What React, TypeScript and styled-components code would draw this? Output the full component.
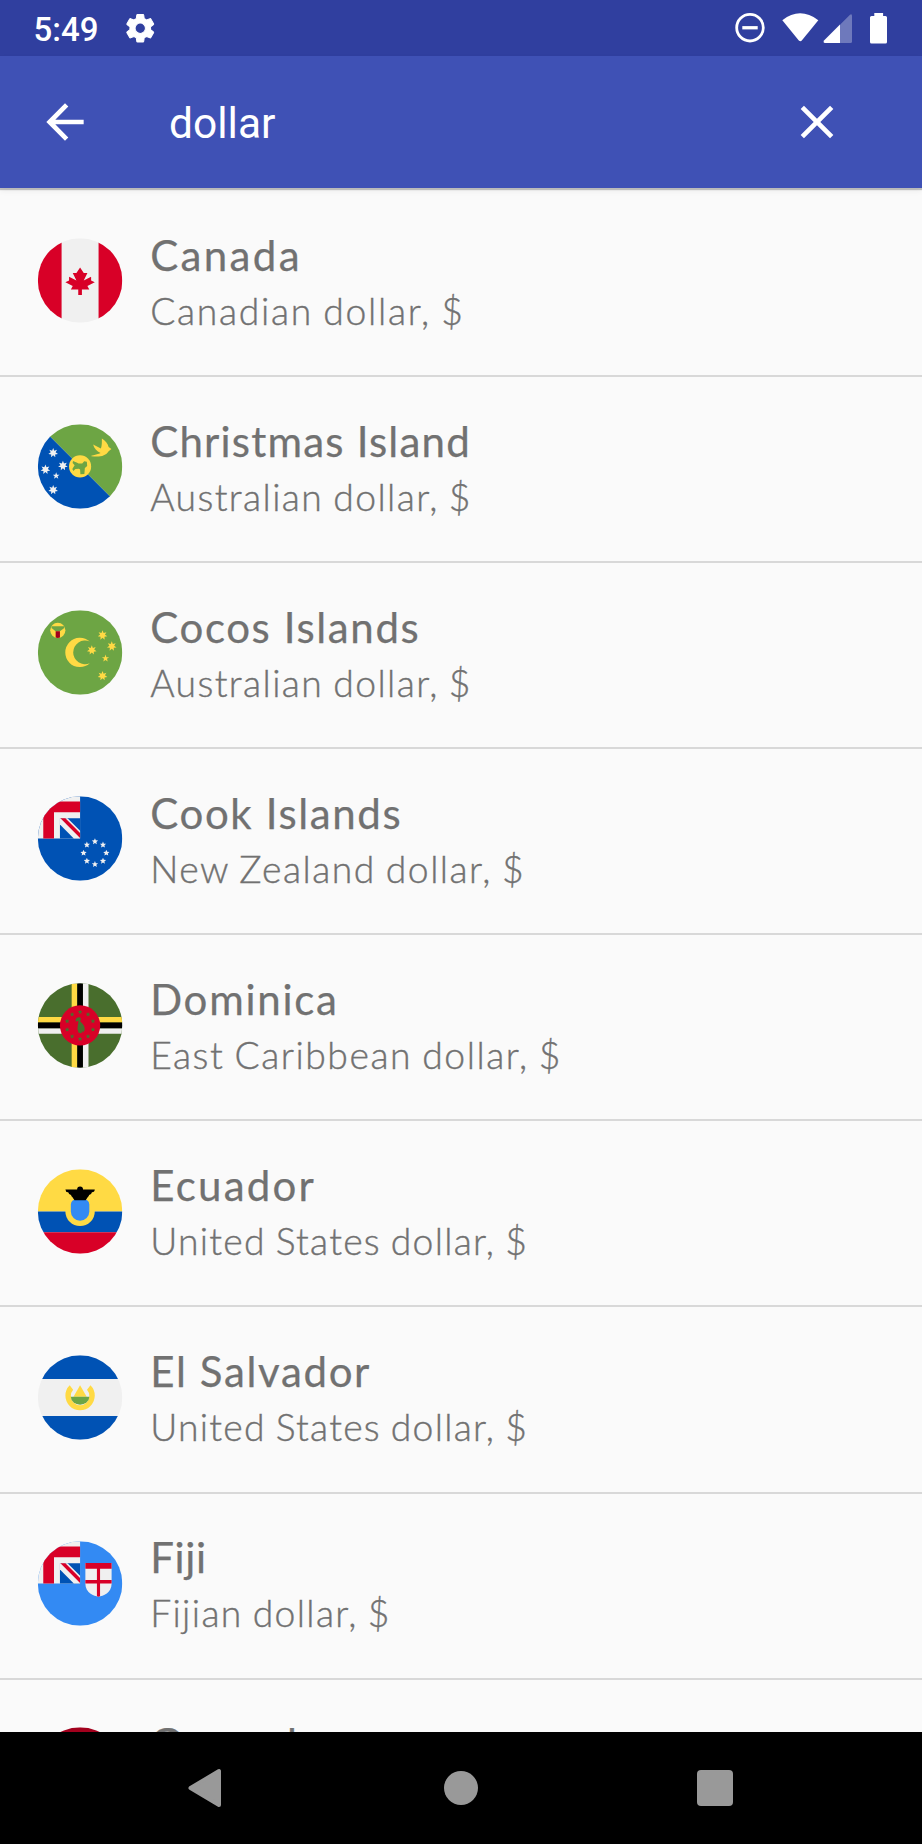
import React from 'react';
import styled, { createGlobalStyle } from 'styled-components';
import { MdArrowBack, MdClose, MdSettings } from 'react-icons/md';

const GlobalStyle = createGlobalStyle`
  * { box-sizing: border-box; }
  html, body { margin: 0; padding: 0; overflow: hidden; background: #fafafa; }
`;

const Screen = styled.div`
  width: 922px;
  height: 1844px;
  display: flex;
  flex-direction: column;
  overflow: hidden;
  background: #fafafa;
  font-family: Lato, 'Liberation Sans', sans-serif;
`;

const StatusBar = styled.header`
  flex: none;
  height: 56px;
  padding: 0 34px 0 33.5px;
  display: flex;
  align-items: center;
  background: #303f9f;
  color: #fff;
  svg { display: block; }
`;

const Clock = styled.span`
  width: 89.5px;
  font: 500 33px/56px Roboto, sans-serif;
  padding-top: 3px;
`;

const Gear = styled(MdSettings)`
  path[fill='none'] { stroke: none; }
`;

const StatusIcons = styled.div`
  margin-left: auto;
  display: flex;
  height: 56px;
`;

const AppBar = styled.div`
  flex: none;
  position: relative;
  z-index: 1;
  height: 132px;
  padding: 0 77px 0 37px;
  display: flex;
  align-items: center;
  background: #3f51b5;
  color: #fff;
  box-shadow: 0 2px 1px rgba(0, 0, 0, 0.22), 0 3px 6px rgba(0, 0, 0, 0.06);
`;

const Query = styled.span`
  flex: 1;
  margin-left: 76px;
  padding-top: 4px;
  font: 400 42.5px/56px Roboto, sans-serif;
`;

const IconButton = styled.button`
  width: 56px;
  height: 56px;
  padding: 0;
  border: 0;
  background: none;
  color: inherit;
  svg { display: block; }
`;

const List = styled.ul`
  flex: 1;
  min-height: 0;
  margin: 0;
  padding: 2.9px 0 0;
  list-style: none;
  overflow: hidden;
`;

const Row = styled.li`
  height: 186.1px;
  padding: 47.3px 37px 0;
  display: flex;
  gap: 27.2px;
  border-bottom: 2px solid #d8d8d8;
`;

const FlagSvg = styled.svg`
  flex: none;
  width: 86px;
  height: 86px;
  display: block;
`;

const Labels = styled.div`
  color: #717171;
  white-space: nowrap;
`;

const Country = styled.div<{ $track: number }>`
  margin-top: -11.7px;
  font-size: 42px;
  line-height: 56px;
  font-weight: 400;
  -webkit-text-stroke: 0.25px #717171;
  letter-spacing: ${(p) => p.$track}px;
`;

const Currency = styled.div<{ $track: number }>`
  font-size: 37.3px;
  line-height: 56px;
  font-weight: 300;
  -webkit-text-stroke: 0.4px #717171;
  word-spacing: -1.5px;
  letter-spacing: ${(p) => p.$track}px;
`;

const NavBar = styled.nav`
  flex: none;
  height: 112.5px;
  padding: 0 187px;
  display: flex;
  justify-content: space-between;
  align-items: center;
  background: #000;
`;

function Star({ x, y, r, n = 7, inner = 0.5, fill }: { x: number; y: number; r: number; n?: number; inner?: number; fill: string }) {
  const points = Array.from({ length: n * 2 }, (_, i) => {
    const a = (Math.PI * i) / n - Math.PI / 2;
    const d = i % 2 ? r * inner : r;
    return `${(x + d * Math.cos(a)).toFixed(1)},${(y + d * Math.sin(a)).toFixed(1)}`;
  }).join(' ');
  return <polygon points={points} fill={fill} />;
}

function UnionJack({ field }: { field: string }) {
  return (
    <>
      <path d="M0 0H256V256H0z" fill="#f0f0f0" />
      <path d="M33 256V33H256V98H98V256z" fill="#d80027" />
      <path d="M134 256V134H256V256z" fill={field} />
      <path d="M134 134H180L256 210V256H218L134 172z" fill="#f0f0f0" />
      <path d="M137 134H167L256 223V253z" fill="#d80027" />
    </>
  );
}

const Y = '#ffda44';
const W = '#f0f0f0';
const G = '#6da544';
const B = '#0052b4';
const R = '#d80027';

const flags: Record<string, React.ReactNode> = {
  ca: (
    <>
      <path d="M0 0H512V512H0z" fill={W} />
      <path d="M0 0H144V512H0zM368 0H512V512H368z" fill={R} />
      <path d="M300.522 289.391L345.043 267.13l-22.26-11.13v-22.261L278.26 256l22.262-44.522H278.26L256 178.087l-22.26 33.391h-22.262L233.74 256l-44.522-22.261V256l-22.26 11.13 44.52 22.261-11.13 22.261h44.522v33.391h22.26v-33.391h44.522z" fill={R} />
    </>
  ),
  cx: (
    <>
      <path d="M0 0H512V512z" fill={G} />
      <path d="M0 0V512H512z" fill={B} />
      <circle cx="256" cy="256" r="67" fill={Y} />
      <path d="M213 223l22 9 12 6h22l12-14 16 3 2 27-14 12-3 36-24 2-2-30-8-4-20 2-13 11-6-12 14-22-12-14z" fill={G} />
      <path d="M324 191C352 184 368 180 380 174 357 164 341 147 335 123L382 147C389 130 388 108 388 87 409 98 424 119 429 138L446 151 429 164C411 194 373 201 324 194z" fill={Y} />
      <Star x={93} y={174} r={30} fill={W} />
      <Star x={46} y={275} r={30} fill={W} />
      <Star x={152} y={252} r={30} fill={W} />
      <Star x={111} y={313} r={22} n={5} inner={0.4} fill={W} />
      <Star x={93} y={398} r={30} fill={W} />
    </>
  ),
  cc: (
    <>
      <path d="M0 0H512V512H0z" fill={G} />
      <circle cx="121" cy="122" r="46" fill={Y} />
      <path d="M83 97H160V108L134 128H108L83 108z" fill={G} />
      <path d="M108 128H134V166Q121 171 108 166z" fill="#a2001d" />
      <path d="M315 190A89 89 0 1 0 315 322A72 72 0 1 1 315 190z" fill={Y} />
      <Star x={327} y={242} r={30} fill={Y} />
      <Star x={392} y={152} r={30} fill={Y} />
      <Star x={448} y={219} r={30} fill={Y} />
      <Star x={410} y={292} r={23} n={5} inner={0.4} fill={Y} />
      <Star x={392} y={398} r={30} fill={Y} />
    </>
  ),
  ck: (
    <>
      <path d="M0 0H512V512H0z" fill={B} />
      <UnionJack field={B} />
      {Array.from({ length: 8 }, (_, i) => (
        <Star key={i} x={346 + 69 * Math.cos((i * Math.PI) / 4)} y={344 + 69 * Math.sin((i * Math.PI) / 4)} r={20} n={5} inner={0.45} fill={W} />
      ))}
    </>
  ),
  dm: (
    <>
      <path d="M0 0H512V512H0z" fill="#496e2d" />
      <path d="M205 0H239V512H205zM0 205H512V239H0z" fill={Y} />
      <path d="M273 0H307V512H273zM0 273H512V307H0z" fill={W} />
      <path d="M239 0H273V512H239zM0 239H512V273H0z" fill="#000" />
      <circle cx="256" cy="256" r="122" fill={R} />
      {Array.from({ length: 10 }, (_, i) => {
        const a = (i * Math.PI) / 5 - Math.PI / 2;
        return <Star key={i} x={256 + 82 * Math.cos(a)} y={256 + 82 * Math.sin(a)} r={15} n={5} inner={0.45} fill="#496e2d" />;
      })}
      <path d="M229 218Q235 205 254 207L261 214 257 232Q286 254 284 286L273 300 270 290 264 304 247 300Q235 281 242 256 247 240 245 228L230 234z" fill="#496e2d" />
    </>
  ),
  ec: (
    <>
      <path d="M0 0H512V256H0z" fill={Y} />
      <path d="M0 256H512V382H0z" fill={B} />
      <path d="M0 382H512V512H0z" fill={R} />
      <circle cx="256" cy="256" r="89" fill={Y} />
      <path d="M200 214Q202 186 228 184H284Q310 186 312 214V256A56 56 0 0 1 200 256z" fill="#338af3" />
      <path d="M167 123H238A18 18 0 1 1 274 123H345Q345 138 328 140 325 154 311 156 308 166 303 168L290 188H222L209 168Q203 166 201 156 187 154 184 140 168 139 167 123z" fill="#000" />
    </>
  ),
  sv: (
    <>
      <path d="M0 0H512V512H0z" fill={W} />
      <path d="M0 0H512V144H0zM0 368H512V512H0z" fill={B} />
      <path d="M319 182L298 210A56 56 0 0 1 312 247 56 56 0 0 1 200 247 56 56 0 0 1 214 210L193 182A89 89 0 1 0 319 182z" fill={Y} />
      <path d="M256 183L216 252H296z" fill={Y} />
      <path d="M200 252H312A56 48 0 0 1 200 252z" fill={G} />
    </>
  ),
  fj: (
    <>
      <path d="M0 0H512V512H0z" fill="#338af3" />
      <UnionJack field={B} />
      <path d="M288 133H447V256C447 314 395 332 367.500 336 340 332 288 314 288 256z" fill="#f0f0f0" />
      <path d="M288 133H447V167H377V235H447V256H377V334L367.500 336 358 334V256H288V235H358V167H288z" fill={R} />
    </>
  ),
  gd: <path d="M0 0H512V512H0z" fill="#a2001d" />,
};

function Flag({ code }: { code: string }) {
  const clip = `flag-${code}`;
  return (
    <FlagSvg viewBox="-5 -1 521 521">
      <clipPath id={clip}>
        <circle cx="256" cy="256" r="256" />
      </clipPath>
      <g clipPath={`url(#${clip})`}>{flags[code]}</g>
    </FlagSvg>
  );
}

const countries = [
  { code: 'ca', name: 'Canada', currency: 'Canadian dollar, $', nt: 2.35, ct: 1.7 },
  { code: 'cx', name: 'Christmas Island', currency: 'Australian dollar, $', nt: 1.2, ct: 1.4 },
  { code: 'cc', name: 'Cocos Islands', currency: 'Australian dollar, $', nt: 1.62, ct: 1.4 },
  { code: 'ck', name: 'Cook Islands', currency: 'New Zealand dollar, $', nt: 1.62, ct: 1.47 },
  { code: 'dm', name: 'Dominica', currency: 'East Caribbean dollar, $', nt: 1.75, ct: 1.53 },
  { code: 'ec', name: 'Ecuador', currency: 'United States dollar, $', nt: 2.25, ct: 1.25 },
  { code: 'sv', name: 'El Salvador', currency: 'United States dollar, $', nt: 1.65, ct: 1.25 },
  { code: 'fj', name: 'Fiji', currency: 'Fijian dollar, $', nt: 0.7, ct: 1.35 },
  { code: 'gd', name: 'Grenada', currency: 'East Caribbean dollar, $', nt: 2.35, ct: 1.53 },
];

export default function App() {
  return (
    <Screen>
      <GlobalStyle />
      <StatusBar>
        <Clock>5:49</Clock>
        <Gear size={34.5} stroke="#fff" strokeWidth={0.7} />
        <StatusIcons>
          <svg width="154" height="56" viewBox="734 0 154 56" fill="#fff">
            <circle cx="750" cy="27.700" r="13.300" fill="none" stroke="#fff" strokeWidth="2.800" />
            <path d="M742.300 26.100h15.400v3.300h-15.400z" />
            <path d="M782.300 20.200Q800 6.500 818.300 20.200L801.800 40.500Q800.300 42 798.800 40.500z" />
            <path d="M840 43V24.800L850 14.800Q852 13.500 852 16V41.500Q852 43 850.500 43z" opacity=".3" />
            <path d="M840 43V24.500L824 40.500Q822.800 42.500 825 43z" />
            <path d="M874.300 13h8.800v3h2.400q1.500 0 1.500 1.500v24.500q0 1.500-1.500 1.500h-14q-1.500 0-1.500-1.500v-24.500q0-1.500 1.500-1.500h2.800z" />
          </svg>
        </StatusIcons>
      </StatusBar>
      <AppBar>
        <IconButton aria-label="Back"><MdArrowBack size={56} /></IconButton>
        <Query>dollar</Query>
        <IconButton aria-label="Clear"><MdClose size={56} /></IconButton>
      </AppBar>
      <List>
        {countries.map((c) => (
          <Row key={c.code}>
            <Flag code={c.code} />
            <Labels>
              <Country $track={c.nt}>{c.name}</Country>
              <Currency $track={c.ct}>{c.currency}</Currency>
            </Labels>
          </Row>
        ))}
      </List>
      <NavBar>
        <svg width="38" height="40" viewBox="0 0 38 40">
          <path d="M3.500 20L32 3V37z" fill="#999" stroke="#999" strokeWidth="4" strokeLinejoin="round" />
        </svg>
        <svg width="38" height="40" viewBox="0 0 38 40">
          <circle cx="19" cy="20" r="17" fill="#999" />
        </svg>
        <svg width="38" height="40" viewBox="0 0 38 40">
          <rect x="0" y="2" width="36" height="36" rx="4" fill="#999" />
        </svg>
      </NavBar>
    </Screen>
  );
}
